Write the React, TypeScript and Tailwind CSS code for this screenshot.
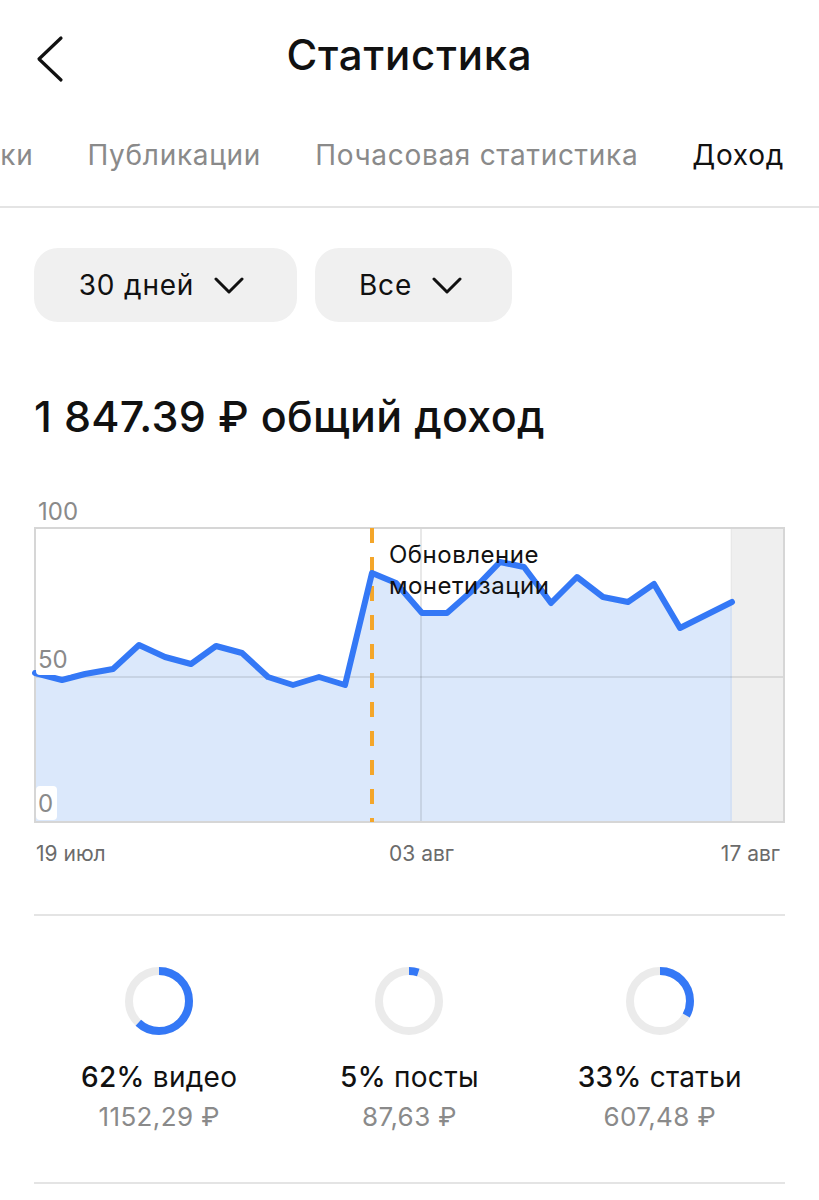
import { useMemo } from "react";

const linePoints: [number, number][] = [
  [35, 673], [62, 680], [85, 674], [113, 669], [139, 645], [165, 657],
  [191, 664], [216, 646], [242, 653], [268, 677], [293, 685], [319, 677],
  [345, 685], [372, 573], [396, 583], [422, 613], [447, 613], [473, 590],
  [500, 562], [524, 567], [551, 603], [577, 577], [603, 597], [628, 602],
  [654, 584], [680, 628], [706, 615], [732, 602],
];

const tabs = ["Метрики", "Публикации", "Почасовая статистика", "Доход"];

const shares = [
  { pct: 62, label: "видео", amount: "1152,29 ₽" },
  { pct: 5, label: "посты", amount: "87,63 ₽" },
  { pct: 33, label: "статьи", amount: "607,48 ₽" },
];

const Chevron = () => (
  <svg width="30" height="17" viewBox="0 0 30 17" fill="none">
    <path d="M2 2 L15 15 L28 2" stroke="#111" strokeWidth="3" strokeLinecap="round" strokeLinejoin="round" />
  </svg>
);

const Donut = ({ pct }: { pct: number }) => {
  const r = 30;
  const c = 2 * Math.PI * r;
  return (
    <svg width="68" height="68" viewBox="0 0 68 68">
      <circle cx="34" cy="34" r={r} fill="none" stroke="#ebebeb" strokeWidth="8" />
      <circle
        cx="34"
        cy="34"
        r={r}
        fill="none"
        stroke="#3478f6"
        strokeWidth="8"
        strokeDasharray={`${(c * pct) / 100} ${c}`}
        transform="rotate(-90 34 34)"
      />
    </svg>
  );
};

const IncomeChart = () => {
  const line = useMemo(() => linePoints.map(([x, y], i) => `${i ? "L" : "M"}${x},${y}`).join(" "), []);
  const area = `${line} L732,822 L35,822 Z`;
  return (
    <svg className="block" width="819" height="380" viewBox="0 490 819 380" style={{ fontFamily: "Inter, sans-serif" }}>
      <rect x="731" y="528" width="53" height="294" fill="#efefef" />
      <path d={area} fill="#dbe8fb" />
      <line x1="35" y1="677" x2="784" y2="677" stroke="rgba(0,0,0,0.12)" strokeWidth="1.5" />
      <line x1="421" y1="528" x2="421" y2="822" stroke="rgba(0,0,0,0.12)" strokeWidth="1.5" />
      <line x1="731" y1="528" x2="731" y2="822" stroke="rgba(0,0,0,0.06)" strokeWidth="1" />
      <rect x="35" y="528" width="749" height="294" fill="none" stroke="#d6d6d6" strokeWidth="2" />
      <line x1="372" y1="528" x2="372" y2="822" stroke="#f4a62a" strokeWidth="4" strokeDasharray="15 14" />
      <path d={line} fill="none" stroke="#3478f6" strokeWidth="6" strokeLinejoin="round" strokeLinecap="round" />

      <rect x="34" y="496" width="52" height="31" fill="#fff" />
      <text x="38" y="520" fontSize="24" fill="#8a8a8a">100</text>
      <rect x="36" y="645" width="36" height="30" rx="4" fill="#fff" />
      <text x="38" y="668" fontSize="24" fill="#8a8a8a">50</text>
      <rect x="36" y="786" width="21" height="34" rx="4" fill="#fff" />
      <text x="38" y="812" fontSize="24" fill="#8a8a8a">0</text>

      <text x="389" y="563" fontSize="24" letterSpacing="0.5" fill="#111">Обновление</text>
      <text x="389" y="594" fontSize="24" letterSpacing="0.5" fill="#111">монетизации</text>

      <text x="36" y="861" fontSize="21" fill="#6b6b6b">19 июл</text>
      <text x="389" y="861" fontSize="21" fill="#6b6b6b">03 авг</text>
      <text x="780" y="861" fontSize="21" fill="#6b6b6b" textAnchor="end">17 авг</text>
    </svg>
  );
};

export default function App() {
  return (
    <div className="w-[819px] h-[1200px] overflow-hidden bg-white text-[#111] font-['Inter',sans-serif]">
      <div className="relative h-[110px] flex items-center justify-center">
        <svg className="absolute left-[34px] top-[35px]" width="32" height="48" viewBox="0 0 32 48" fill="none">
          <path d="M27 3 L5 24 L27 45" stroke="#111" strokeWidth="3.2" strokeLinecap="round" strokeLinejoin="round" />
        </svg>
        <h1 className="text-[42px] font-medium leading-none tracking-[0.8px]">Статистика</h1>
      </div>

      <div className="h-[96px] pb-[6px] pr-[35px] flex items-center justify-end gap-[54px] overflow-hidden whitespace-nowrap text-[28px] tracking-[0.7px]">
        {tabs.map((t, i) => (
          <span key={t} className={i === tabs.length - 1 ? "text-[#111]" : "text-[#8a8a8a]"}>
            {t}
          </span>
        ))}
      </div>
      <div className="h-[2px] bg-[#e4e4e4]" />

      <div className="mt-[40px] px-[34px] flex gap-[18px]">
        <button className="h-[74px] w-[263px] rounded-[24px] bg-[#f0f0f0] flex items-center justify-center gap-[20px] pr-[8px] text-[28px] tracking-[0.8px]">
          <span>30 дней</span>
          <Chevron />
        </button>
        <button className="h-[74px] w-[197px] rounded-[24px] bg-[#f0f0f0] flex items-center justify-center gap-[20px] pr-[6px] text-[28px] tracking-[0.8px]">
          <span>Все</span>
          <Chevron />
        </button>
      </div>

      <div className="mt-[69px] px-[34px] text-[43px] font-medium leading-[50px] tracking-[0.3px]">
        1 847.39 ₽ общий доход
      </div>

      <div className="mt-[49px]">
        <IncomeChart />
      </div>

      <div className="mt-[44px] mx-[34px] h-[2px] bg-[#e4e4e4]" />

      <div className="mx-[34px] pt-[51px] grid grid-cols-3">
        {shares.map((s) => (
          <div key={s.label} className="flex flex-col items-center">
            <Donut pct={s.pct} />
            <div className="mt-[25px] text-[28px] leading-[34px] tracking-[0.3px]">
              <span className="font-medium">{s.pct}%</span> {s.label}
            </div>
            <div className="mt-[6px] text-[26px] leading-[34px] tracking-[0.4px] text-[#8a8a8a]">{s.amount}</div>
          </div>
        ))}
      </div>

      <div className="mt-[48px] mx-[34px] h-[2px] bg-[#e4e4e4]" />
    </div>
  );
}
